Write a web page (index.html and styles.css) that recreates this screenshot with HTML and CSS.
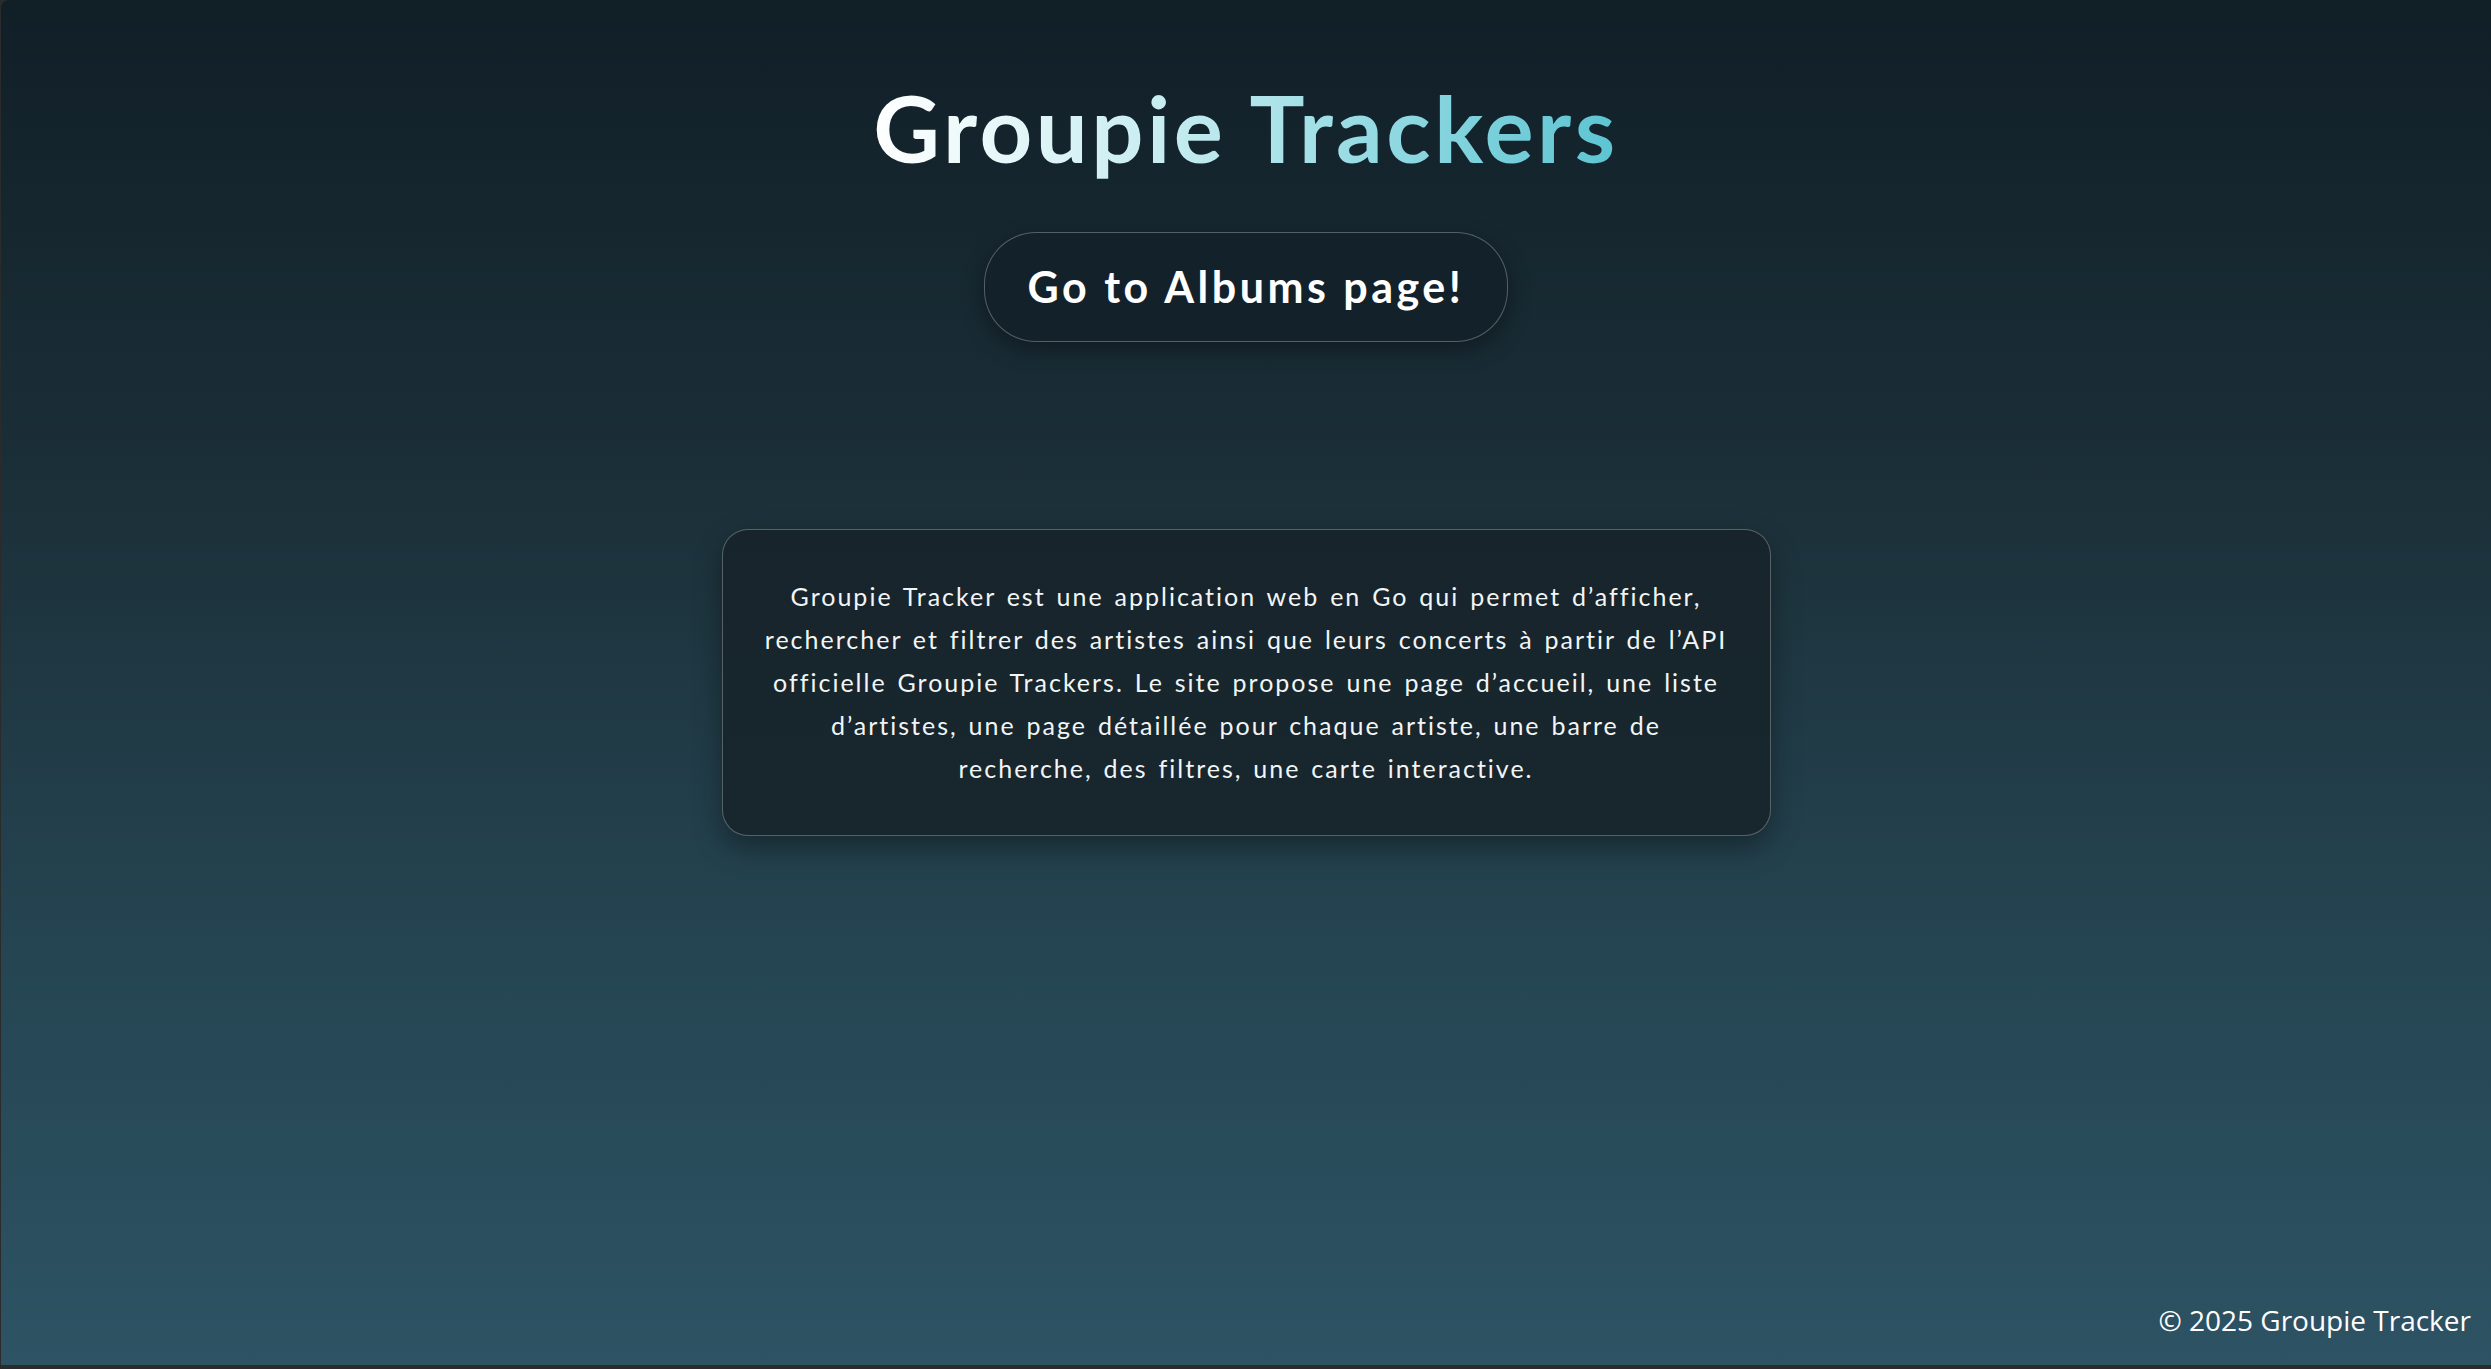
FILE: index.html
```html
<!DOCTYPE html>
<html lang="fr">
<head>
<meta charset="utf-8">
<title>Groupie Trackers</title>
<link rel="stylesheet" href="styles.css">
</head>
<body>
<div class="page">
  <main class="main">
    <h1 class="title">Groupie Trackers</h1>
    <a class="btn" href="#">Go to Albums page!</a>
    <section class="card">
      <p class="card-text">Groupie Tracker est une application web en Go qui permet d’afficher,<br>
      rechercher et filtrer des artistes ainsi que leurs concerts à partir de l’API<br>
      officielle Groupie Trackers. Le site propose une page d’accueil, une liste<br>
      d’artistes, une page détaillée pour chaque artiste, une barre de<br>
      recherche, des filtres, une carte interactive.</p>
    </section>
  </main>
  <footer class="footer">© 2025 Groupie Tracker</footer>
</div>
</body>
</html>
```

FILE: styles.css
```css
html, body {
  margin: 0;
  padding: 0;
  background: #2b2b2b;
}

body {
  height: 1369px;
  overflow: hidden;
}

.page {
  min-height: 1365px;
  margin-left: 1px;
  border-top-left-radius: 8px;
  display: flex;
  flex-direction: column;
  background: linear-gradient(180deg, #111f27 0%, #1b2f38 35%, #254552 70%, #2d5364 100%);
  font-family: "Lato", "DejaVu Sans", sans-serif;
  color: #ffffff;
}

.main {
  flex: 1;
  display: flex;
  flex-direction: column;
  align-items: center;
  padding-top: 73px;
}

.title {
  margin: 0;
  font-size: 92px;
  font-weight: 700;
  line-height: 1.2;
  letter-spacing: 3.5px;
  background: linear-gradient(90deg, #ffffff 0%, #c5ecf0 40%, #8fd8e1 70%, #5cc4d2 100%);
  -webkit-background-clip: text;
  background-clip: text;
  color: transparent;
}

.btn {
  margin-top: 49px;
  display: inline-block;
  padding: 28px 43px;
  font-size: 43px;
  font-weight: 700;
  line-height: 1.2;
  letter-spacing: 3.5px;
  color: #ffffff;
  text-decoration: none;
  background: #13212a;
  border: 1px solid rgba(255, 255, 255, 0.28);
  border-radius: 52px;
  box-shadow: 0 8px 22px rgba(0, 0, 0, 0.35);
}

.card {
  margin-top: 187px;
  width: 1049px;
  box-sizing: border-box;
  padding: 45px 30px;
  background: linear-gradient(180deg, #17242b 0%, #18272e 100%);
  border: 1px solid rgba(255, 255, 255, 0.28);
  border-radius: 26px;
  box-shadow: 0 12px 28px rgba(0, 0, 0, 0.35);
}

.card-text {
  margin: 0;
  font-size: 25px;
  line-height: 43px;
  letter-spacing: 2px;
  word-spacing: 2.5px;
  text-align: center;
  white-space: nowrap;
  color: #f2f5f6;
}

.footer {
  text-align: right;
  padding: 0 20px 27px 0;
  font-family: "Open Sans", "Noto Sans", sans-serif;
  font-size: 28px;
  line-height: 1.2;
  color: #ffffff;
}
```
